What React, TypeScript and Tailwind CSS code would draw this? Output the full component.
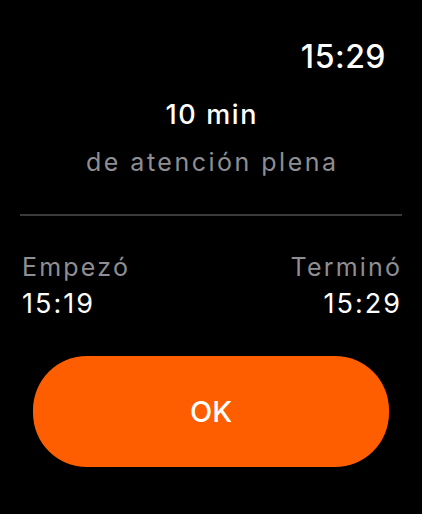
import React from "react";

export default function App() {
  return (
    <div
      className="w-[422px] h-[514px] bg-black text-white flex flex-col overflow-hidden"
      style={{ fontFamily: "Inter, 'Noto Sans', sans-serif" }}
    >
      <div className="flex justify-end pr-[36px] pt-[41px]">
        <span className="text-[32px] leading-[32px] font-medium tracking-[0.5px]">15:29</span>
      </div>

      <div className="flex flex-col items-center mt-[28px]">
        <span className="text-[27px] leading-[27px] font-medium tracking-[1.6px] pl-[1.6px]">10 min</span>
        <span className="text-[25px] leading-[25px] text-[#8e8e93] tracking-[2.5px] pl-[2.5px] mt-[22px]">
          de atención plena
        </span>
      </div>

      <div className="mx-[20px] mt-[39px] h-[2px] bg-[#3a3a3c]" />

      <div className="flex justify-between pl-[22px] pr-[22px] mt-[39px]">
        <div className="flex flex-col items-start">
          <span className="text-[25px] leading-[25px] text-[#8e8e93] tracking-[2.2px]">Empezó</span>
          <span className="text-[27px] leading-[27px] tracking-[2px] mt-[10px]">15:19</span>
        </div>
        <div className="flex flex-col items-end">
          <span className="text-[25px] leading-[25px] text-[#8e8e93] tracking-[2.2px] mr-[-2.2px]">Terminó</span>
          <span className="text-[27px] leading-[27px] tracking-[2px] mr-[-2px] mt-[10px]">15:29</span>
        </div>
      </div>

      <button className="mx-[33px] mt-[39px] h-[111px] rounded-[54px] bg-[#ff5e00] text-white text-[29px] leading-[29px] font-medium">
        OK
      </button>
    </div>
  );
}
